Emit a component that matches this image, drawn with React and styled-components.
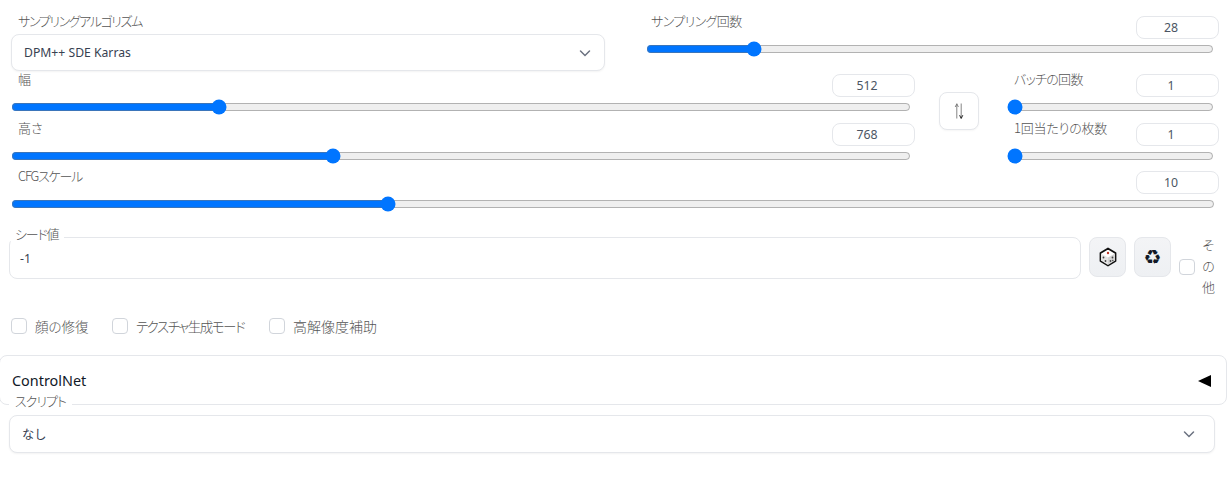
import React from "react";
import styled, { createGlobalStyle } from "styled-components";

const Global = createGlobalStyle`
  html, body { margin: 0; padding: 0; background: #fff; overflow: hidden; }
  body { font-family: "Noto Sans", "Noto Sans CJK JP", sans-serif; font-size: 13px; color: #374151; }
  * { box-sizing: border-box; }
`;

const Page = styled.div`
  width: 1232px;
  height: 487px;
  padding-top: 13px;
  overflow: hidden;
`;

const TopGrid = styled.div`
  display: grid;
  grid-template-columns: 594px 573px;
  column-gap: 41px;
  padding-left: 11px;
`;

const SliderOffset = styled.div`
  padding-top: 3px;
`;

const Label = styled.span`
  font-family: "Noto Sans CJK JP", sans-serif;
  font-feature-settings: "palt";
  font-size: 13px;
  font-weight: 300;
  line-height: 16px;
  color: #555;
  letter-spacing: ${(p) => p.$ls ?? 0}px;
  padding-left: ${(p) => p.$indent ?? 7}px;
`;

const HeadLabel = styled(Label)`
  margin-top: -3px;
`;

const SelectBox = styled.div`
  display: flex;
  align-items: center;
  justify-content: space-between;
  height: ${(p) => p.$h}px;
  padding: 0 ${(p) => p.$pr}px 0 ${(p) => p.$pl}px;
  background: #fff;
  border: 1px solid #e5e7eb;
  border-radius: 8px;
  box-shadow: 0 1px 2px rgba(0, 0, 0, 0.05);
  font-size: 12.2px;
  color: #374151;
`;

const SelectColumn = styled.div`
  display: flex;
  flex-direction: column;
  gap: 5px;
`;

const Chevron = () => (
  <svg width="14" height="14" viewBox="0 0 14 14" fill="none" stroke="#6b7280" strokeWidth="1.5" strokeLinecap="round">
    <path d="M2.500 5l4.500 4.500L11.500 5" />
  </svg>
);

const SliderHead = styled.div`
  display: flex;
  justify-content: space-between;
  align-items: flex-start;
  height: 23px;
`;

const NumberBox = styled.div`
  width: 83px;
  height: 23px;
  display: flex;
  align-items: center;
  justify-content: center;
  padding-right: 13px;
  border: 1px solid #e5e7eb;
  border-radius: 8px;
  font-size: 12.3px;
  color: #4b5563;
  background: #fff;
`;

const Range = styled.input`
  display: block;
  width: ${(p) => p.$w}px;
  height: 16px;
  margin: 2px 0;
`;

const Slider = ({ label, value, min, max, width, indent, ls }) => (
  <div>
    <SliderHead>
      <HeadLabel $indent={indent} $ls={ls}>{label}</HeadLabel>
      <NumberBox>{value}</NumberBox>
    </SliderHead>
    <Range type="range" readOnly value={value} min={min} max={max} $w={width} />
  </div>
);

const MiddleGrid = styled.div`
  display: grid;
  grid-template-columns: 904px 92px 212px;
  padding-left: 11px;
  margin-top: 3px;
`;

const StackedSliders = styled.div`
  display: flex;
  flex-direction: column;
  gap: 6px;
`;

const SwapCell = styled.div`
  display: flex;
  align-items: flex-start;
  padding: 18px 0 0 24px;
`;

const SwapButton = styled.button`
  width: 40px;
  height: 38px;
  padding: 0;
  display: flex;
  align-items: center;
  justify-content: center;
  background: #fff;
  border: 1px solid #e5e7eb;
  border-radius: 8px;
  box-shadow: 0 1px 2px rgba(0, 0, 0, 0.04);
`;

const CfgRow = styled.div`
  width: 1219px;
  padding-left: 11px;
  margin-top: 5px;
`;

const SeedRow = styled.div`
  display: flex;
  align-items: flex-start;
  padding-left: 9px;
  margin-top: 25px;
`;

const Field = styled.div`
  position: relative;
  width: ${(p) => p.$w}px;
`;

const FieldLegend = styled.span`
  position: absolute;
  left: 0;
  top: ${(p) => p.$top}px;
  padding: 0 6px;
  background: #fff;
  font-family: "Noto Sans CJK JP", sans-serif;
  font-feature-settings: "palt";
  font-size: 13px;
  font-weight: 300;
  line-height: 16px;
  letter-spacing: ${(p) => p.$ls}px;
  color: #555;
  border-radius: 4px;
`;

const SeedInput = styled.div`
  height: 42px;
  display: flex;
  align-items: center;
  padding-left: 10px;
  border: 1px solid #e5e7eb;
  border-radius: 8px;
  font-size: 12.3px;
  color: #374151;
  background: #fff;
`;

const ToolButton = styled.button`
  width: 37px;
  height: 40px;
  margin-left: ${(p) => p.$ml}px;
  padding: 0;
  display: flex;
  align-items: center;
  justify-content: center;
  background: linear-gradient(to bottom, #f3f4f6, #eef0f3);
  border: 1px solid #e5e7eb;
  border-radius: 8px;
  color: #111827;
`;

const RecycleGlyph = styled.span`
  font-family: "DejaVu Sans", sans-serif;
  font-size: 20px;
  font-weight: 700;
  line-height: 20px;
  color: #111827;
`;

const Box = styled.span`
  display: block;
  flex: none;
  width: 16px;
  height: 16px;
  background: #fff;
  border: 1px solid #d1d5db;
  border-radius: 4px;
`;

const MoreOption = styled.div`
  display: flex;
  align-items: flex-start;
  margin-left: 8px;
  padding-top: 22px;
`;

const VerticalLabel = styled.span`
  width: 13px;
  margin: -25px 0 0 7px;
  font-family: "Noto Sans CJK JP", sans-serif;
  font-size: 13px;
  font-weight: 300;
  line-height: 21px;
  color: #555;
`;

const CheckRow = styled.div`
  display: flex;
  padding-left: 11px;
  margin-top: 20px;
`;

const Check = styled.label`
  display: flex;
  align-items: center;
  gap: 8px;
  width: ${(p) => p.$w}px;
  height: 18px;
  font-family: "Noto Sans CJK JP", sans-serif;
  font-feature-settings: "palt";
  font-size: ${(p) => p.$fs}px;
  letter-spacing: ${(p) => p.$ls ?? 0}px;
  font-weight: 300;
  color: #555;
`;

const Accordion = styled.div`
  display: flex;
  align-items: center;
  justify-content: space-between;
  width: 1228px;
  height: 50px;
  margin: 20px 0 0 -1px;
  padding: 0 15px 0 12px;
  border: 1px solid #e5e7eb;
  border-radius: 8px;
  background: #fff;
  font-size: 14.400px;
  color: #111827;
`;

const Triangle = styled.span`
  width: 0;
  height: 0;
  margin-top: 1px;
  border-top: 6px solid transparent;
  border-bottom: 6px solid transparent;
  border-right: 13px solid #000;
`;

const ScriptField = styled.div`
  padding-left: 9px;
  margin-top: 10px;
`;

const Dice = () => (
  <svg width="20" height="20" viewBox="0 0 20 20">
    <path d="M10 1.500L17.500 6v8L10 18.500 2.500 14V6z" fill="#fff" stroke="#111" strokeWidth="1.800" strokeLinejoin="round" />
    <path d="M3 13.500V6.500L10 10.500v7.500z" fill="#e5e5e5" />
    <path d="M17 13.500V6.500L10 10.500v7.500z" fill="#d4d4d4" />
    <circle cx="10" cy="6" r="1.200" fill="#c0392b" />
    <circle cx="5.500" cy="10.500" r=".9" fill="#444" />
    <circle cx="7.500" cy="14" r=".9" fill="#444" />
    <circle cx="14.500" cy="10.500" r=".9" fill="#444" />
    <circle cx="12.500" cy="14" r=".9" fill="#444" />
    <circle cx="14.800" cy="13.500" r=".7" fill="#444" />
  </svg>
);

const Swap = () => (
  <svg width="10" height="16" viewBox="0 0 10 16" fill="none" stroke="#777" strokeWidth=".9">
    <path d="M2.800 15.500V.8M1.200 4l1.600-3.200L4.400 4" />
    <path d="M7.200 .5v14.500" />
    <path d="M5.600 12.200l1.600 3.300 1.600-3.300" stroke="#111" />
  </svg>
);

export default function App() {
  return (
    <Page>
      <Global />
      <TopGrid>
        <SelectColumn>
          <Label $ls={-1.35}>サンプリングアルゴリズム</Label>
          <SelectBox $h={37} $pl={12} $pr={12}>
            DPM++ SDE Karras
            <Chevron />
          </SelectBox>
        </SelectColumn>
        <SliderOffset>
          <Slider label="サンプリング回数" value={28} min={1} max={150} width={568} indent={5} ls={-0.6} />
        </SliderOffset>
      </TopGrid>
      <MiddleGrid>
        <StackedSliders>
          <Slider label="幅" value={512} min={64} max={2048} width={900} />
          <Slider label="高さ" value={768} min={64} max={2048} width={900} />
        </StackedSliders>
        <SwapCell>
          <SwapButton aria-label="swap">
            <Swap />
          </SwapButton>
        </SwapCell>
        <StackedSliders>
          <Slider label="バッチの回数" value={1} min={1} max={100} width={207} ls={-0.7} />
          <Slider label="1回当たりの枚数" value={1} min={1} max={8} width={207} ls={-0.2} />
        </StackedSliders>
      </MiddleGrid>
      <CfgRow>
        <Slider label="CFGスケール" value={10} min={1} max={30} width={1204} ls={-1.2} />
      </CfgRow>
      <SeedRow>
        <Field $w={1072}>
          <FieldLegend $top={-11} $ls={-1.2}>シード値</FieldLegend>
          <SeedInput>-1</SeedInput>
        </Field>
        <ToolButton $ml={8} aria-label="random">
          <Dice />
        </ToolButton>
        <ToolButton $ml={8} aria-label="reuse">
          <RecycleGlyph>♻</RecycleGlyph>
        </ToolButton>
        <MoreOption>
          <Box />
          <VerticalLabel>その他</VerticalLabel>
        </MoreOption>
      </SeedRow>
      <CheckRow>
        <Check $w={101} $fs={13.500}>
          <Box />
          顔の修復
        </Check>
        <Check $w={157} $fs={13.500} $ls={-1.5}>
          <Box />
          テクスチャ生成モード
        </Check>
        <Check $w={130} $fs={14}>
          <Box />
          高解像度補助
        </Check>
      </CheckRow>
      <Accordion>
        <span>ControlNet</span>
        <Triangle />
      </Accordion>
      <ScriptField>
        <Field $w={1206}>
          <FieldLegend $top={-22} $ls={-1}>スクリプト</FieldLegend>
          <SelectBox $h={38} $pl={12} $pr={18}>
            なし
            <Chevron />
          </SelectBox>
        </Field>
      </ScriptField>
    </Page>
  );
}
